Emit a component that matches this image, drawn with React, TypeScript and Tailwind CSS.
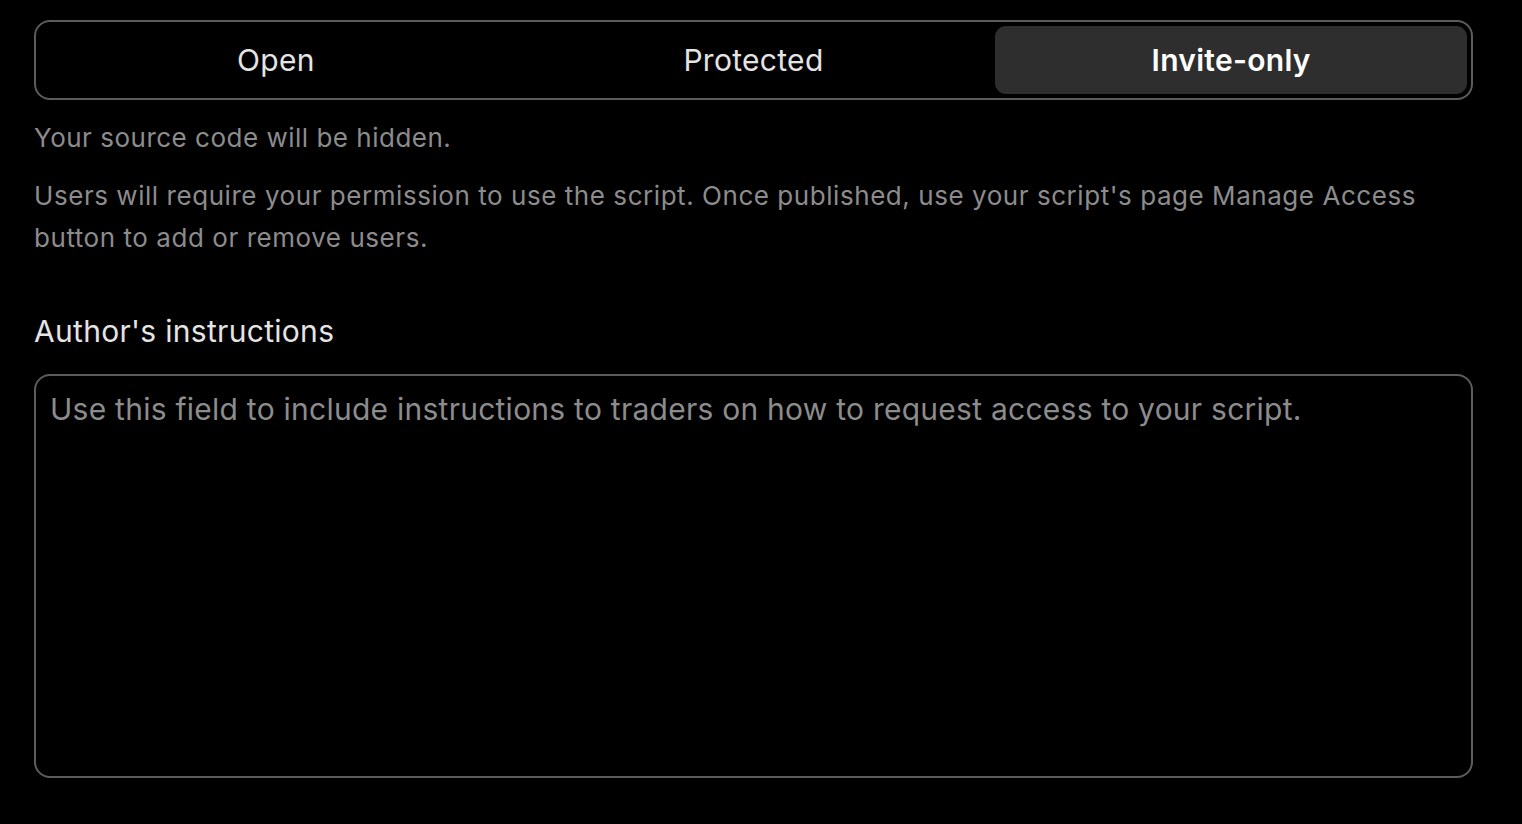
import React from "react";

const options = ["Open", "Protected", "Invite-only"];

export default function App() {
  const active = "Invite-only";
  return (
    <div className="min-h-[824px] w-full bg-black font-['Inter','Noto_Sans',sans-serif]">
      <div className="ml-[34px] w-[1439px] pt-[20px]">
        <div className="flex h-[80px] rounded-[16px] border-2 border-[#5c5c5c] p-px">
          {options.map((o) => (
            <div key={o} className="flex-1 p-[3px]">
              <button
                className={
                  o === active
                    ? "h-full w-full rounded-[11px] bg-[#2e2e2e] text-[30px] font-semibold tracking-[0.3px] text-white"
                    : "h-full w-full rounded-[11px] text-[30px] tracking-[0.3px] text-[#e4e4e4]"
                }
              >
                {o}
              </button>
            </div>
          ))}
        </div>
        <p className="mt-[20px] text-[26px] leading-[36px] tracking-[0.5px] text-[#8c8c8c]">
          Your source code will be hidden.
        </p>
        <p className="mt-[19px] text-[26px] leading-[42px] tracking-[0.55px] text-[#8c8c8c]">
          Users will require your permission to use the script. Once published, use your script's page Manage Access
          <br />
          button to add or remove users.
        </p>
        <h3 className="mt-[52px] text-[30px] leading-[40px] tracking-[0.3px] text-[#e4e4e4]">Author's instructions</h3>
        <textarea
          className="mt-[23px] block h-[404px] w-full resize-none rounded-[16px] border-2 border-[#5c5c5c] bg-black px-[14px] py-[13px] text-[30px] leading-[40px] tracking-[0.25px] text-white outline-none placeholder:text-[#8c8c8c]"
          placeholder="Use this field to include instructions to traders on how to request access to your script."
        />
      </div>
    </div>
  );
}
